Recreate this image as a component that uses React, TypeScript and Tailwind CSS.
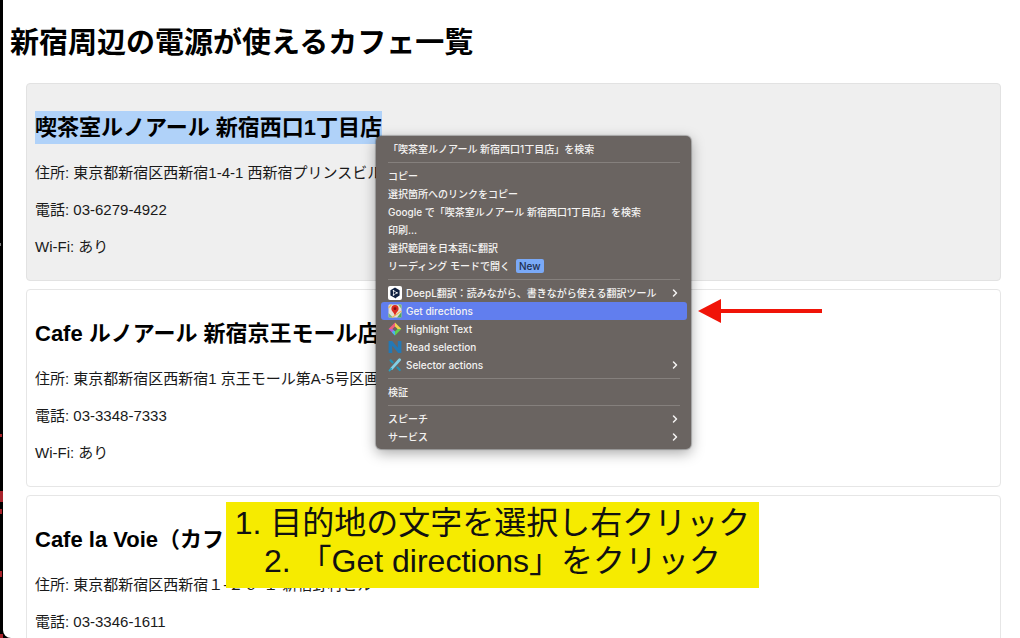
import React from 'react';
import { ChevronRight } from 'lucide-react';

interface Cafe {
  name: string;
  address: string;
  phone: string;
  wifi?: string;
}

interface MenuEntry {
  label: string;
  icon?: React.ReactNode;
  badge?: string;
  submenu?: boolean;
  active?: boolean;
}

const cafes: Cafe[] = [
  {
    name: '喫茶室ルノアール 新宿西口1丁目店',
    address: '東京都新宿区西新宿1-4-1 西新宿プリンスビル',
    phone: '03-6279-4922',
    wifi: 'あり',
  },
  {
    name: 'Cafe ルノアール 新宿京王モール店',
    address: '東京都新宿区西新宿1 京王モール第A-5号区画',
    phone: '03-3348-7333',
    wifi: 'あり',
  },
  {
    name: 'Cafe la Voie（カフ',
    address: '東京都新宿区西新宿１-２６-１ 新宿野村ビル',
    phone: '03-3346-1611',
  },
];

const DeepLIcon = () => (
  <svg viewBox="0 0 14 14" className="h-[14px] w-[14px]">
    <rect width="14" height="14" rx="2" fill="#fff" />
    <path d="M7 1.6 11.6 4.2V9.6L8.4 11.4 7.6 12.6 7 12.1 2.4 9.6V4.2Z" fill="#0f2040" />
    <path d="M5.5 4.7V9L8.9 6.8Z" fill="none" stroke="#fff" strokeWidth="0.7" />
    <circle cx="5.5" cy="4.7" r="0.8" fill="#fff" />
    <circle cx="8.9" cy="6.8" r="0.9" fill="#fff" />
    <circle cx="5.5" cy="9" r="0.8" fill="#fff" />
  </svg>
);

const MapPinIcon = () => (
  <svg viewBox="0 0 14 14" className="h-[14px] w-[14px]">
    <rect x="0.5" y="0.5" width="13" height="13" rx="1" fill="#e4e0d4" />
    <path d="M0.5 9 5 13.5H0.5ZM10 0.5H13.5V5Z" fill="#7db87a" />
    <path d="M9 13.5 13.5 8V13.5Z" fill="#4fa860" />
    <path d="M0.5 4 3.5 0.5M4 13.5 13.5 7" stroke="#f0b95a" strokeWidth="1.2" />
    <path d="M7 1C4.7 1 3.4 2.7 3.4 4.7 3.4 7.2 6.2 8.6 7 11.8 7.8 8.6 10.6 7.2 10.6 4.7 10.6 2.7 9.3 1 7 1Z" fill="#dd2a20" />
    <circle cx="7" cy="4.7" r="1.4" fill="#7d1410" />
  </svg>
);

const HighlightIcon = () => (
  <svg viewBox="0 0 14 14" className="h-[14px] w-[14px]">
    <path d="M7 0.6 0.6 7H4.4L7 4.4Z" fill="#f0607c" />
    <path d="M7 0.6 13.4 7H9.6L7 4.4Z" fill="#f2d44c" />
    <path d="M13.4 7 7 13.4V9.6L9.6 7Z" fill="#62cf4e" />
    <path d="M0.6 7 7 13.4V9.6L4.4 7Z" fill="#b45fd6" />
    <path d="M3.8 10.2 7 13.4V9.6L5.7 8.3Z" fill="#45b8e8" />
  </svg>
);

const ReadIcon = () => (
  <svg viewBox="0 0 14 14" className="h-[14px] w-[14px]">
    <path d="M0.6 1H4.2L9.8 7.8V1H13.4V13H10.2L4.2 5.8V13H0.6Z" fill="#2478b4" />
  </svg>
);

const SelectorIcon = () => (
  <svg viewBox="0 0 14 14" className="h-[14px] w-[14px]" strokeLinecap="round">
    <path d="M2.6 2.4 4.6 4.4M9.4 9.4 11.8 12" stroke="#248fb0" strokeWidth="2.2" />
    <path d="M11.6 1.8 3.6 10.6" stroke="#7fd0e6" strokeWidth="2.8" />
    <path d="M3 10.8 1.6 12.4" stroke="#2aa2c4" strokeWidth="2" />
  </svg>
);

const menuGroups: MenuEntry[][] = [
  [{ label: '「喫茶室ルノアール 新宿西口1丁目店」を検索' }],
  [
    { label: 'コピー' },
    { label: '選択箇所へのリンクをコピー' },
    { label: 'Google で「喫茶室ルノアール 新宿西口1丁目店」を検索' },
    { label: '印刷...' },
    { label: '選択範囲を日本語に翻訳' },
    { label: 'リーディング モードで開く', badge: 'New' },
  ],
  [
    { label: 'DeepL翻訳：読みながら、書きながら使える翻訳ツール', icon: <DeepLIcon />, submenu: true },
    { label: 'Get directions', icon: <MapPinIcon />, active: true },
    { label: 'Highlight Text', icon: <HighlightIcon /> },
    { label: 'Read selection', icon: <ReadIcon /> },
    { label: 'Selector actions', icon: <SelectorIcon />, submenu: true },
  ],
  [{ label: '検証' }],
  [
    { label: 'スピーチ', submenu: true },
    { label: 'サービス', submenu: true },
  ],
];

const CafeCard: React.FC<{ cafe: Cafe; selected: boolean }> = ({ cafe, selected }) => (
  <article
    className={`rounded border px-2 pt-[27px] pb-[22px] whitespace-nowrap ${
      selected ? 'border-[#e2e2e2] bg-[#efefef]' : 'border-[#e6e6e6] bg-white'
    }`}
  >
    <h2 className="mb-[18px] text-[22px] leading-[33px] font-bold">
      <span className={selected ? 'inline-block bg-[#b0d2f9]' : 'inline-block'}>{cafe.name}</span>
    </h2>
    <div className="flex flex-col gap-[15px] text-[15px] leading-[22px] text-[#1a1a1a]">
      <p>住所: {cafe.address}</p>
      <p>電話: {cafe.phone}</p>
      {cafe.wifi && <p>Wi-Fi: {cafe.wifi}</p>}
    </div>
  </article>
);

const ContextMenu: React.FC = () => (
  <div
    role="menu"
    className="absolute top-[136px] left-[376px] w-[315px] rounded-[5px] bg-[#6a6461] pt-1 pr-1 pb-[3px] pl-[5px] font-['Inter','Noto_Sans_CJK_JP',sans-serif] text-[10px] font-medium text-[#f4f3f2] shadow-[0_4px_14px_rgba(0,0,0,0.35),0_0_1px_1px_rgba(0,0,0,0.25)]"
  >
    {menuGroups.map((group, index) => (
      <div key={index}>
        {index > 0 && <hr className="mx-[7px] my-1 border-t border-[#85807d]" />}
        {group.map((entry) => (
          <button
            key={entry.label}
            type="button"
            role="menuitem"
            className={`flex h-[18px] w-full items-center rounded-[3px] pr-[6px] pl-[7px] text-left whitespace-nowrap ${
              entry.active ? 'bg-[#617eee]' : ''
            }`}
          >
            {entry.icon && <span className="mr-1 shrink-0">{entry.icon}</span>}
            <span>{entry.label}</span>
            {entry.badge && (
              <span className="ml-[6px] rounded-[2px] bg-[#7aa9f7] px-[3px] leading-[14px] text-[#1f2f52]">
                {entry.badge}
              </span>
            )}
            {entry.submenu && <ChevronRight className="ml-auto h-3 w-3" strokeWidth={3} />}
          </button>
        ))}
      </div>
    ))}
  </div>
);

const App: React.FC = () => {
  return (
    <div className="relative flex h-screen overflow-hidden bg-black font-['Liberation_Sans','Noto_Sans_CJK_JP',sans-serif] text-black">
      {/* Sliver of the desktop behind the window */}
      <svg width="3" height="638" className="shrink-0" aria-hidden="true">
        <path d="M0 434H2V437H0ZM0 491H3V502H0ZM0 509H2V514H0ZM0 571H2V577H0ZM0 634H3V638H0Z" fill="#a8232b" />
        <path d="M0 243H1V246H0Z" fill="#777" />
      </svg>

      <main className="h-full min-w-0 flex-1 overflow-hidden rounded-bl-lg bg-white pr-[19px] pl-[7px]">
        <h1 className="pt-[23px] pb-5 text-[29px] leading-[40px] font-bold whitespace-nowrap">
          新宿周辺の電源が使えるカフェ一覧
        </h1>
        <div className="ml-4 flex flex-col gap-2">
          {cafes.map((cafe, index) => (
            <CafeCard key={cafe.name} cafe={cafe} selected={index === 0} />
          ))}
        </div>
      </main>

      <ContextMenu />

      {/* Annotations */}
      <svg
        width="124"
        height="24"
        viewBox="0 0 124 24"
        className="absolute top-[299px] left-[698px]"
        aria-hidden="true"
      >
        <path d="M0 12 23 0V24Z" fill="#f01408" />
        <path d="M22 12H124" stroke="#f01408" strokeWidth="4" />
      </svg>
      <div className="absolute top-[502px] left-[226px] w-[533px] bg-[#f6eb00] pt-[2px] pb-2 text-center text-[32px] leading-[38px] whitespace-nowrap text-[#111111]">
        <p>1. 目的地の文字を選択し右クリック</p>
        <p>2. 「Get directions」をクリック</p>
      </div>
    </div>
  );
};

export default App;
